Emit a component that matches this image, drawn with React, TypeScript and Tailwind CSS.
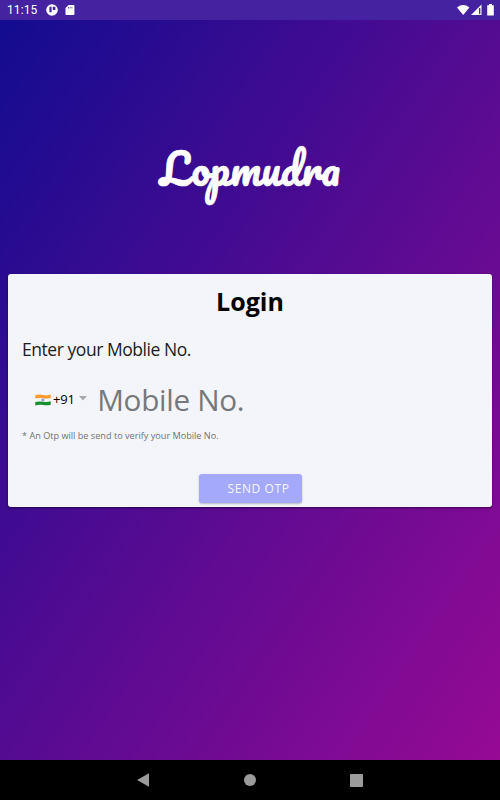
import { FC, useState } from "react";

const StatusBar: FC = () => {
  return (
    <div className="flex h-5 items-center justify-between bg-[#4522a0] pl-[7px] pr-[6px] text-white">
      <div className="flex items-center">
        <span className="font-[Roboto] text-[12px] leading-5 tracking-[0.1px]">11:15</span>
        <svg className="ml-[9px]" width="12" height="12" viewBox="0 0 12 12">
          <circle cx="6" cy="6" r="5.8" fill="white" />
          <path d="M3.400 2.800h2.200v5.400H3.400zM6.800 2.800h2.600v3.200H6.800z" fill="#4522a0" />
        </svg>
        <svg className="ml-[7px]" width="10" height="12" viewBox="0 0 10 12">
          <path d="M3.600 1H8.600q.8 0 .8.8v8.500q0 .8-.8.8H1.300q-.8 0-.8-.8V4z" fill="white" />
          <path d="M3.500 2.800v1.700M5.200 2.800v1.700M6.900 2.800v1.700" stroke="#4522a0" strokeWidth="0.7" />
        </svg>
      </div>
      <div className="flex items-center">
        <svg width="13" height="12" viewBox="0 0 13 12">
          <path d="M0 3.400Q6.200-1.200 12.400 3.400L6.200 11z" fill="white" />
        </svg>
        <svg className="ml-px" width="11" height="12" viewBox="0 0 11 12">
          <path d="M10.500.5V11H0z" fill="white" />
          <path d="M8.700 4v6.200" stroke="#4522a0" strokeWidth="1.300" />
        </svg>
        <svg className="mb-px ml-[5px]" width="7" height="12" viewBox="0 0 7 12">
          <path d="M2 0h3v1.300h1.800V11.500H.2V1.300H2z" fill="white" />
        </svg>
      </div>
    </div>
  );
};

const IndiaFlag: FC = () => {
  return (
    <svg width="16" height="12" viewBox="0 0 16 12">
      <path d="M.3 1.200Q4 0 8 1t7.700-.4v3.600Q12 5.200 8 4.500T.3 4.800z" fill="#ff9a2e" />
      <path d="M.3 4.600Q4 3.500 8 4.400t7.700-.4v3.600Q12 8.500 8 7.700T.3 8.200z" fill="#f4f4f4" />
      <path d="M.3 8Q4 7 8 7.700t7.700-.4v3.500Q12 11.800 8 11T.3 11.500z" fill="#15902c" />
      <circle cx="7.900" cy="6" r="1.100" fill="none" stroke="#4a5bb0" strokeWidth="0.7" />
    </svg>
  );
};

const NavigationBar: FC = () => {
  return (
    <div className="flex h-10 items-center justify-between bg-black pl-[137px] pr-[137px]">
      <svg width="13" height="14" viewBox="0 0 13 14">
        <path d="M12 .3v13.400L0 7z" fill="#9b9b9b" />
      </svg>
      <div className="size-3 rounded-full bg-[#9b9b9b]" />
      <div className="size-[13px] rounded-[1px] bg-[#9b9b9b]" />
    </div>
  );
};

const App: FC = () => {
  const [mobile, setMobile] = useState("");

  return (
    <div className="flex h-screen flex-col font-['Open_Sans',sans-serif]">
      <StatusBar />
      <main className="flex flex-1 flex-col bg-linear-to-br/srgb from-[#120c90] to-[#960a94] px-2">
        <h1 className="flex h-[254px] justify-center pt-[119px] font-['Pacifico',cursive] text-[41.7px] font-normal leading-[60px] text-white [-webkit-text-stroke:0.7px_white]">
          Lopmudra
        </h1>

        <form
          onSubmit={(e) => e.preventDefault()}
          className="flex h-[233px] flex-col rounded-[3px] bg-[#f3f5fa] px-[14px] shadow-[0_1px_2px_rgba(0,0,0,0.5)]"
        >
          <h2 className="mt-[9px] text-center text-[25px] font-bold leading-9 text-black">
            Login
          </h2>
          <label htmlFor="mobile" className="mt-[18px] text-[17.5px] leading-6 tracking-[-0.45px] text-[#1c1c1c]">
            Enter your Moblie No.
          </label>

          <div className="mt-[15px] flex h-12 items-center pl-[13px]">
            <IndiaFlag />
            <span className="ml-[2px] text-[13px] tracking-[-0.2px] text-black">+91</span>
            <svg className="mb-[3px] ml-1" width="8" height="5" viewBox="0 0 8 5">
              <path d="M0 0h8L4 4.500z" fill="#a9a9ab" />
            </svg>
            <input
              id="mobile"
              type="tel"
              value={mobile}
              onChange={(e) => setMobile(e.target.value)}
              placeholder="Mobile No."
              className="ml-[10.5px] h-12 w-[300px] text-[29.7px] leading-[48px] tracking-[-0.3px] placeholder:text-[#77787b] focus:outline-none"
            />
          </div>

          <p className="mt-[4px] text-[9.15px] leading-4 text-[#707175]">
            * An Otp will be send to verify your Mobile No.
          </p>

          <button
            type="submit"
            className="mt-[30px] h-[29px] w-[103px] self-center rounded-[3px] bg-[#a4a9fb] pl-[17px] text-[12px] tracking-[0.6px] text-[#f3f5fa] shadow-[0_1px_2px_rgba(0,0,0,0.25)]"
          >
            SEND OTP
          </button>
        </form>
      </main>
      <NavigationBar />
    </div>
  );
};

export default App;
